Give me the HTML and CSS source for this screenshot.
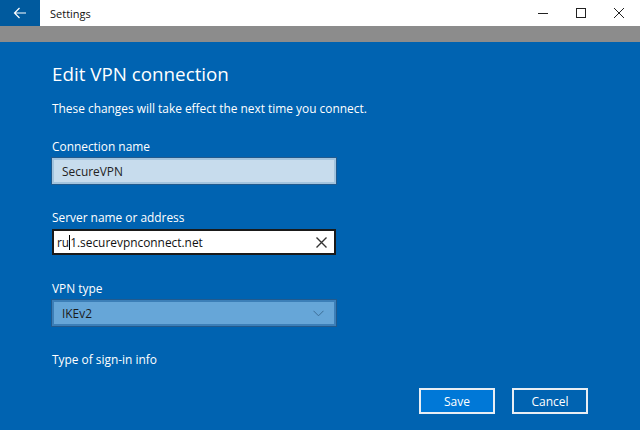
FILE: index.html
```html
<!DOCTYPE html>
<html>
<head>
<meta charset="utf-8">
<link rel="stylesheet" href="styles.css">
</head>
<body>
<div class="window">
  <div class="titlebar">
    <div class="back">
      <svg width="14" height="12" viewBox="0 0 14 12"><path d="M13 6H1.5M6.5 1L1.5 6l5 5" fill="none" stroke="#fff" stroke-width="1.2"/></svg>
    </div>
    <div class="title">Settings</div>
    <div class="controls">
      <div class="ctl"><svg width="10" height="10" viewBox="0 0 10 10"><path d="M0 5.5h10" stroke="#222" stroke-width="1"/></svg></div>
      <div class="ctl"><svg width="10" height="10" viewBox="0 0 10 10"><rect x="0.5" y="0.5" width="9" height="9" fill="none" stroke="#222" stroke-width="1"/></svg></div>
      <div class="ctl"><svg width="10" height="10" viewBox="0 0 10 10"><path d="M0 0L10 10M10 0L0 10" stroke="#222" stroke-width="1"/></svg></div>
    </div>
  </div>
  <div class="greybar"></div>
  <div class="content">
    <h1 class="heading">Edit VPN connection</h1>
    <p class="note">These changes will take effect the next time you connect.</p>
    <div class="field">
      <div class="label">Connection name</div>
      <div class="input input-disabled">SecureVPN</div>
    </div>
    <div class="field">
      <div class="label">Server name or address</div>
      <div class="input input-active"><span>ru<span class="caret"></span>1.securevpnconnect.net</span>
        <svg class="clear" width="11" height="11" viewBox="0 0 11 11"><path d="M0.5 0.5L10.5 10.5M10.5 0.5L0.5 10.5" stroke="#333" stroke-width="1.4"/></svg>
      </div>
    </div>
    <div class="field">
      <div class="label">VPN type</div>
      <div class="input input-select"><span>IKEv2</span>
        <svg class="chev" width="11" height="7" viewBox="0 0 11 7"><path d="M0.5 0.8L5.5 5.8L10.5 0.8" fill="none" stroke="#3d6e96" stroke-width="1"/></svg>
      </div>
    </div>
    <div class="field">
      <div class="label">Type of sign-in info</div>
    </div>
    <div class="buttons">
      <button class="btn btn-primary">Save</button>
      <button class="btn">Cancel</button>
    </div>
  </div>
</div>
</body>
</html>
```
FILE: styles.css
```css
html, body {
  margin: 0;
  padding: 0;
}
body {
  width: 640px;
  height: 430px;
  overflow: hidden;
  font-family: "Open Sans", "Noto Sans", sans-serif;
  background: #0063b1;
}
.window {
  display: flex;
  flex-direction: column;
  height: 430px;
}
.titlebar {
  height: 26px;
  background: #fff;
  display: flex;
  align-items: center;
}
.back {
  width: 40px;
  height: 26px;
  background: #005a9e;
  display: flex;
  align-items: center;
  justify-content: center;
}
.title {
  margin-left: 10px;
  font-size: 11px;
  color: #111;
  flex: 1;
}
.controls {
  display: flex;
  height: 26px;
  margin-right: 2px;
}
.ctl {
  width: 38px;
  height: 26px;
  display: flex;
  align-items: center;
  justify-content: center;
}
.greybar {
  height: 16px;
  background: #8c8c8c;
}
.content {
  flex: 1;
  padding: 18px 0 0 52px;
  color: #fff;
  display: flex;
  flex-direction: column;
}
.heading {
  margin: 0;
  font-weight: 400;
  font-size: 18.8px;
  line-height: 28px;
}
.note {
  margin: 12px 0 0;
  font-size: 11.9px;
  line-height: 16px;
}
.field {
  margin-top: 25px;
}
.field:first-of-type {
  margin-top: 22px;
}
.label {
  font-size: 11.9px;
  line-height: 16px;
  margin-bottom: 4px;
}
.input {
  box-sizing: border-box;
  width: 284px;
  height: 26px;
  display: flex;
  align-items: center;
  justify-content: space-between;
  padding: 0 7px 0 8px;
  font-size: 11.9px;
  color: #111;
}
.input-disabled {
  background: #c7dced;
  border: 2px solid #a3c4de;
  box-shadow: 0 0 0 1px #215a8e;
  color: #222;
}
.input-active {
  background: #fff;
  border: 2px solid #1a1a1a;
  padding-left: 3px;
}
.caret {
  display: inline-block;
  width: 1px;
  height: 15px;
  background: #000;
  vertical-align: -3px;
}
.input-select {
  background: #66a6d8;
  border: 2px solid #3c7fb8;
  box-shadow: 0 0 0 1px #215a8e;
  color: #1a1a1a;
}
.chev {
  margin-right: 3px;
}
.buttons {
  margin-top: 17px;
  align-self: flex-end;
  margin-right: 52px;
  display: flex;
  gap: 17px;
}
.btn {
  width: 76px;
  height: 26px;
  box-sizing: border-box;
  border: 2px solid #e8eef4;
  background: transparent;
  color: #fff;
  font-family: inherit;
  font-size: 12px;
  padding: 0;
}
.btn-primary {
  background: #0078d7;
}
```
